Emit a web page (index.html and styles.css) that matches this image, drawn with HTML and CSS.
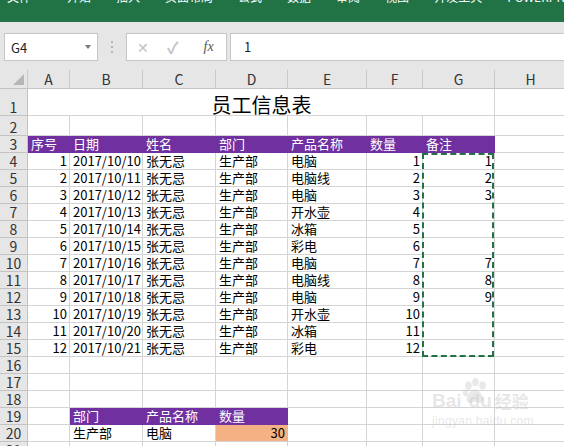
FILE: index.html
```html
<!DOCTYPE html>
<html lang="zh-CN">
<head>
    <meta charset="UTF-8">
    <meta name="viewport" content="width=device-width, initial-scale=1.0">
    <title>员工信息表 - Excel</title>
    <link rel="stylesheet" href="styles.css">
</head>
<body>
    <!-- Ribbon tabs -->
    <div class="ribbon">
        <span class="tab file">文件</span>
        <span class="tab">开始</span>
        <span class="tab">插入</span>
        <span class="tab">页面布局</span>
        <span class="tab">公式</span>
        <span class="tab">数据</span>
        <span class="tab">审阅</span>
        <span class="tab">视图</span>
        <span class="tab">开发工具</span>
        <span class="tab">POWERPIVOT</span>
    </div>

    <!-- Formula bar -->
    <div class="formula-bar">
        <div class="name-box">
            <span>G4</span>
            <span class="caret"></span>
        </div>
        <div class="grip"><i></i><i></i><i></i></div>
        <div class="func-box">
            <span class="icon-x">✕</span>
            <span class="icon-ok">✓</span>
            <span class="icon-fx">fx</span>
        </div>
        <div class="formula-input">1</div>
    </div>

    <!-- Sheet -->
    <div class="sheet">
        <table class="grid">
            <colgroup>
                <col class="c-rh">
                <col class="c-a">
                <col class="c-b">
                <col class="c-c">
                <col class="c-d">
                <col class="c-e">
                <col class="c-f">
                <col class="c-g">
                <col class="c-h">
            </colgroup>
            <thead>
                <tr class="r-head">
                    <th class="corner"><span class="tri"></span></th>
                    <th>A</th><th>B</th><th>C</th><th>D</th><th>E</th><th>F</th><th>G</th><th>H</th>
                </tr>
            </thead>
            <tbody>
                <tr class="r-title">
                    <th>1</th>
                    <td colspan="7" class="title">员工信息表</td>
                    <td></td>
                </tr>
                <tr class="r-2">
                    <th>2</th>
                    <td></td><td></td><td></td><td></td><td></td><td></td><td></td><td></td>
                </tr>
                <tr>
                    <th>3</th>
                    <td class="hd">序号</td><td class="hd">日期</td><td class="hd">姓名</td><td class="hd">部门</td><td class="hd">产品名称</td><td class="hd">数量</td><td class="hd">备注</td><td></td>
                </tr>
                <tr>
                    <th>4</th>
                    <td class="num">1</td><td class="num">2017/10/10</td><td>张无忌</td><td>生产部</td><td>电脑</td><td class="num">1</td><td class="num">1</td><td></td>
                </tr>
                <tr>
                    <th>5</th>
                    <td class="num">2</td><td class="num">2017/10/11</td><td>张无忌</td><td>生产部</td><td>电脑线</td><td class="num">2</td><td class="num">2</td><td></td>
                </tr>
                <tr>
                    <th>6</th>
                    <td class="num">3</td><td class="num">2017/10/12</td><td>张无忌</td><td>生产部</td><td>电脑</td><td class="num">3</td><td class="num">3</td><td></td>
                </tr>
                <tr>
                    <th>7</th>
                    <td class="num">4</td><td class="num">2017/10/13</td><td>张无忌</td><td>生产部</td><td>开水壶</td><td class="num">4</td><td></td><td></td>
                </tr>
                <tr>
                    <th>8</th>
                    <td class="num">5</td><td class="num">2017/10/14</td><td>张无忌</td><td>生产部</td><td>冰箱</td><td class="num">5</td><td></td><td></td>
                </tr>
                <tr>
                    <th>9</th>
                    <td class="num">6</td><td class="num">2017/10/15</td><td>张无忌</td><td>生产部</td><td>彩电</td><td class="num">6</td><td></td><td></td>
                </tr>
                <tr>
                    <th>10</th>
                    <td class="num">7</td><td class="num">2017/10/16</td><td>张无忌</td><td>生产部</td><td>电脑</td><td class="num">7</td><td class="num">7</td><td></td>
                </tr>
                <tr>
                    <th>11</th>
                    <td class="num">8</td><td class="num">2017/10/17</td><td>张无忌</td><td>生产部</td><td>电脑线</td><td class="num">8</td><td class="num">8</td><td></td>
                </tr>
                <tr>
                    <th>12</th>
                    <td class="num">9</td><td class="num">2017/10/18</td><td>张无忌</td><td>生产部</td><td>电脑</td><td class="num">9</td><td class="num">9</td><td></td>
                </tr>
                <tr>
                    <th>13</th>
                    <td class="num">10</td><td class="num">2017/10/19</td><td>张无忌</td><td>生产部</td><td>开水壶</td><td class="num">10</td><td></td><td></td>
                </tr>
                <tr>
                    <th>14</th>
                    <td class="num">11</td><td class="num">2017/10/20</td><td>张无忌</td><td>生产部</td><td>冰箱</td><td class="num">11</td><td></td><td></td>
                </tr>
                <tr>
                    <th>15</th>
                    <td class="num">12</td><td class="num">2017/10/21</td><td>张无忌</td><td>生产部</td><td>彩电</td><td class="num">12</td><td></td><td></td>
                </tr>
                <tr>
                    <th>16</th>
                    <td></td><td></td><td></td><td></td><td></td><td></td><td></td><td></td>
                </tr>
                <tr>
                    <th>17</th>
                    <td></td><td></td><td></td><td></td><td></td><td></td><td></td><td></td>
                </tr>
                <tr>
                    <th>18</th>
                    <td></td><td></td><td></td><td></td><td></td><td></td><td></td><td></td>
                </tr>
                <tr>
                    <th>19</th>
                    <td></td><td class="hd">部门</td><td class="hd">产品名称</td><td class="hd">数量</td><td></td><td></td><td></td><td></td>
                </tr>
                <tr>
                    <th>20</th>
                    <td></td><td>生产部</td><td>电脑</td><td class="num total">30</td><td></td><td></td><td></td><td></td>
                </tr>
                <tr>
                    <th>21</th>
                    <td></td><td></td><td></td><td></td><td></td><td></td><td></td><td></td>
                </tr>
            </tbody>
        </table>

        <!-- copy marquee around G4:G15 -->
        <div class="marquee"></div>

        <!-- watermark -->
        <div class="watermark">
            <div class="wm-logo">
                <span>Bai</span>
                <svg class="paw" viewBox="0 0 30 30" width="28" height="28">
                    <ellipse cx="8" cy="9" rx="3.5" ry="4.5"/>
                    <ellipse cx="15.5" cy="5.5" rx="3.5" ry="4.5"/>
                    <ellipse cx="23" cy="9" rx="3.5" ry="4.5"/>
                    <ellipse cx="5" cy="17" rx="3" ry="3.8"/>
                    <path d="M15 13c-4 0-9 7-9 11 0 3 3 4 5 3.5 2-.5 2.5-1 4-1s2 .5 4 1c2 .5 5-.5 5-3.5 0-4-5-11-9-11z"/>
                </svg>
                <span class="du">du</span>
                <span class="jy">经验</span>
            </div>
            <div class="wm-url">jingyan.baidu.com</div>
        </div>
    </div>
</body>
</html>
```

FILE: styles.css
```css
* {
    margin: 0;
    padding: 0;
    box-sizing: border-box;
}
body {
    width: 564px;
    height: 446px;
    overflow: hidden;
    background: #fff;
    font-family: 'Noto Sans CJK SC', 'Liberation Sans', sans-serif;
    color: #000;
}

/* ribbon */
.ribbon {
    height: 22px;
    background: #217346;
    display: flex;
    align-items: flex-start;
    gap: 25px;
    padding-left: 7px;
    overflow: hidden;
    white-space: nowrap;
}
.tab {
    color: #fff;
    font-size: 12px;
    line-height: 12px;
    margin-top: -9px;
}
.tab.file {
    margin-right: 11px;
}

/* formula bar */
.formula-bar {
    height: 48px;
    background: #e6e6e6;
    display: flex;
    align-items: flex-start;
    padding-top: 11px;
    padding-left: 4px;
}
.name-box {
    width: 94px;
    height: 28px;
    background: #fff;
    border: 1px solid #c6c6c6;
    display: flex;
    align-items: center;
    justify-content: space-between;
    padding: 0 6px 0 6px;
    font-size: 13px;
    color: #222;
}
.caret {
    width: 0;
    height: 0;
    border-left: 3.5px solid transparent;
    border-right: 3.5px solid transparent;
    border-top: 4px solid #777;
}
.grip {
    width: 28px;
    height: 28px;
    display: flex;
    flex-direction: column;
    align-items: center;
    justify-content: center;
    gap: 3px;
}
.grip i {
    width: 2px;
    height: 2px;
    background: #b4b4b4;
}
.func-box {
    width: 101px;
    height: 28px;
    background: #fff;
    border: 1px solid #c6c6c6;
    display: flex;
    align-items: center;
    padding-left: 10px;
    gap: 18px;
    color: #c2c2c2;
    font-size: 14px;
}
.icon-ok {
    font-size: 16px;
    font-weight: bold;
}
.icon-fx {
    color: #555;
    font-family: 'Liberation Serif', serif;
    font-style: italic;
    font-size: 14px;
    margin-left: 7px;
}
.formula-input {
    flex: 1;
    height: 28px;
    margin-left: 3px;
    background: #fff;
    border: 1px solid #c6c6c6;
    border-right: none;
    padding-left: 13px;
    font-size: 13px;
    line-height: 26px;
    color: #222;
}

/* sheet */
.sheet {
    position: relative;
    overflow: hidden;
    height: 376px;
}
.grid {
    table-layout: fixed;
    border-collapse: separate;
    border-spacing: 0;
    width: 567px;
    font-size: 13px;
}
.c-rh { width: 28px; }
.c-a { width: 42px; }
.c-b { width: 73px; }
.c-c { width: 73px; }
.c-d { width: 72px; }
.c-e { width: 79px; }
.c-f { width: 56px; }
.c-g { width: 72px; }
.c-h { width: 72px; }

.grid tr {
    height: 17px;
}
.grid tr.r-head { height: 19px; }
.grid tr.r-title { height: 27px; }
.grid tr.r-2 { height: 20px; }

.grid td {
    border-right: 1px solid #d4d4d4;
    border-bottom: 1px solid #d4d4d4;
    padding: 0 2px 0 3px;
    line-height: 16px;
    vertical-align: bottom;
    white-space: nowrap;
    overflow: hidden;
}
.grid th {
    background: #e6e6e6;
    border-right: 1px solid #c3c3c3;
    border-bottom: 1px solid #c3c3c3;
    font-weight: normal;
    font-size: 14px;
    line-height: 16px;
    color: #333;
    vertical-align: bottom;
    padding: 0;
}
.grid thead th {
    line-height: 18px;
    vertical-align: middle;
    border-right-color: #c9c9c9;
}
.grid th.corner {
    position: relative;
}
.tri {
    position: absolute;
    right: 3px;
    bottom: 3px;
    width: 0;
    height: 0;
    border-left: 11px solid transparent;
    border-bottom: 11px solid #b6b6b6;
}

.grid td.title {
    font-size: 20px;
    line-height: 21px;
    text-align: center;
}
.grid td.num {
    text-align: right;
}
.grid td.hd {
    background: #7030a0;
    color: #fff;
    border-right-color: #7030a0;
    border-bottom-color: #7030a0;
}
.grid td.total {
    background: #f4b183;
    border-right-color: #f4b183;
}

/* dashed copy marquee */
.marquee {
    position: absolute;
    left: 422px;
    top: 83px;
    width: 72px;
    height: 204px;
    border: 2px dashed #217346;
}

/* watermark */
.watermark {
    position: absolute;
    left: 432px;
    top: 313px;
    color: rgba(200, 200, 200, 0.45);
    font-family: 'Liberation Sans', sans-serif;
    pointer-events: none;
}
.wm-logo {
    display: flex;
    align-items: flex-end;
    font-size: 19px;
    font-weight: bold;
    line-height: 20px;
}
.paw {
    fill: rgba(200, 200, 200, 0.4);
    margin: 0 -20px 0 -1px;
    position: relative;
    top: -6px;
}
.du {
    margin-right: 3px;
    position: relative;
    z-index: 1;
}
.jy {
    font-family: 'Noto Sans CJK SC', sans-serif;
    font-size: 17px;
}
.wm-url {
    font-size: 12px;
    margin-top: 3px;
    letter-spacing: 0.3px;
}
```
